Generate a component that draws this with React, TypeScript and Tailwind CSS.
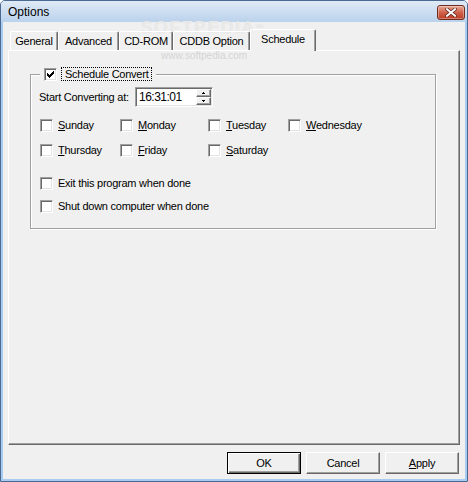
import React from "react";

function CheckBox({ checked = false }: { checked?: boolean }) {
  return (
    <span className="relative box-border block h-[13px] w-[13px] shrink-0 border border-b-white border-l-[#a0a0a0] border-r-white border-t-[#a0a0a0] bg-white shadow-[inset_1px_1px_0_#696969,inset_-1px_-1px_0_#e3e3e3]">
      {checked && (
        <svg className="absolute left-[2px] top-[2px]" width="7" height="7" viewBox="0 0 7 7" shapeRendering="crispEdges">
          <rect x="0" y="2" width="1" height="3" fill="#000" />
          <rect x="1" y="3" width="1" height="3" fill="#000" />
          <rect x="2" y="4" width="1" height="3" fill="#000" />
          <rect x="3" y="3" width="1" height="3" fill="#000" />
          <rect x="4" y="2" width="1" height="3" fill="#000" />
          <rect x="5" y="1" width="1" height="3" fill="#000" />
          <rect x="6" y="0" width="1" height="3" fill="#000" />
        </svg>
      )}
    </span>
  );
}

function Day({ width, children }: { width: string; children: React.ReactNode }) {
  return (
    <div className={"flex items-center " + width}>
      <CheckBox />
      <span className="ml-[5px] leading-[13px]">{children}</span>
    </div>
  );
}

function SpinBtn({ up }: { up: boolean }) {
  return (
    <div className="box-border flex h-[8px] w-[15px] items-center justify-center border border-b-[#696969] border-l-white border-r-[#696969] border-t-white bg-[#f0f0f0] shadow-[inset_-1px_-1px_0_#a0a0a0]">
      <svg width="3" height="2" viewBox="0 0 3 2" shapeRendering="crispEdges">
        {up ? (
          <>
            <rect x="1" y="0" width="1" height="1" fill="#000" />
            <rect x="0" y="1" width="3" height="1" fill="#000" />
          </>
        ) : (
          <>
            <rect x="0" y="0" width="3" height="1" fill="#000" />
            <rect x="1" y="1" width="1" height="1" fill="#000" />
          </>
        )}
      </svg>
    </div>
  );
}

function Btn({ children, isDefault = false }: { children: React.ReactNode; isDefault?: boolean }) {
  return isDefault ? (
    <div className="box-border flex h-[22px] w-[74px] items-center justify-center border border-black bg-[#f0f0f0] shadow-[inset_1px_1px_0_#fff,inset_-1px_-1px_0_#696969,inset_-2px_-2px_0_#a0a0a0]">
      {children}
    </div>
  ) : (
    <div className="box-border flex h-[22px] w-[74px] items-center justify-center border border-b-[#696969] border-l-white border-r-[#696969] border-t-white bg-[#f0f0f0] shadow-[inset_-1px_-1px_0_#a0a0a0]">
      {children}
    </div>
  );
}

export default function App() {
  return (
    <div className="relative box-border flex h-[482px] w-[468px] flex-col overflow-hidden rounded-t-[5px] border border-[#4a6a91] bg-[#a9cbef] font-['Liberation_Sans',Arial,sans-serif] text-[11px] tracking-[-0.25px] text-black">
      {/* title bar */}
      <div className="flex h-[21px] shrink-0 items-center bg-gradient-to-b from-[#e0eaf6] to-[#bad2ec] pl-[7px] pr-[2px]">
        <span className="text-[12px] tracking-normal text-black">Options</span>
        <div className="ml-auto mt-[1px] flex h-[15px] w-[28px] items-center justify-center rounded-[3px] border border-[#6e2b20] bg-gradient-to-b from-[#e8a897] via-[#d0614a] to-[#bd3b22] shadow-[inset_0_0_0_1px_rgba(255,255,255,0.35)]">
          <svg width="12" height="9" viewBox="0 0 12 9">
            <path d="M2 1.2 L10 7.8 M10 1.2 L2 7.8" stroke="#5a2418" strokeWidth="3.4" strokeLinecap="square" />
            <path d="M2 1.2 L10 7.8 M10 1.2 L2 7.8" stroke="#ffffff" strokeWidth="2" strokeLinecap="square" />
          </svg>
        </div>
      </div>

      {/* body */}
      <div className="mx-[2px] mb-[2px] flex flex-1 flex-col bg-[#f0f0f0] px-[5px] pt-[7px]">
        {/* tabs */}
        <div className="relative z-10 -mb-px flex h-[22px] items-end pl-[2px]">
          <div className="mb-px box-border flex h-[19px] w-[48px] items-center justify-center rounded-t-[2px] border-l border-r border-t border-l-white border-r-[#696969] border-t-white leading-[13px] shadow-[inset_-1px_0_0_#a0a0a0]">
            General
          </div>
          <div className="mb-px box-border flex h-[19px] w-[61px] items-center justify-center rounded-t-[2px] border-l border-r border-t border-l-white border-r-[#696969] border-t-white leading-[13px] shadow-[inset_-1px_0_0_#a0a0a0]">
            Advanced
          </div>
          <div className="mb-px box-border flex h-[19px] w-[54px] items-center justify-center rounded-t-[2px] border-l border-r border-t border-l-white border-r-[#696969] border-t-white leading-[13px] shadow-[inset_-1px_0_0_#a0a0a0]">
            CD-ROM
          </div>
          <div className="mb-px box-border flex h-[19px] w-[77px] items-center justify-center rounded-t-[2px] border-l border-r border-t border-l-white border-r-[#696969] border-t-white leading-[13px] shadow-[inset_-1px_0_0_#a0a0a0]">
            CDDB Option
          </div>
          <div className="box-border flex h-[22px] w-[66px] items-center justify-center rounded-t-[2px] border-l border-r border-t border-l-white border-r-[#696969] border-t-white bg-[#f0f0f0] pb-[3px] leading-[13px] shadow-[inset_-1px_0_0_#a0a0a0]">
            Schedule
          </div>
        </div>

        {/* panel */}
        <div className="box-border h-[395px] border border-b-[#696969] border-l-white border-r-[#696969] border-t-white shadow-[inset_-1px_-1px_0_#a0a0a0]">
          <div className="relative ml-[21px] mt-[23px] box-border h-[155px] w-[406px] border border-[#a0a0a0] pl-[8px] pt-[12px] shadow-[inset_1px_1px_0_#fff,1px_1px_0_#fff]">
            {/* legend */}
            <div className="absolute left-[9px] top-[-8px] flex h-[14px] items-center gap-[4px] bg-[#f0f0f0] px-[4px]">
              <CheckBox checked />
              <span className="box-border border border-dotted border-black px-[3px] leading-[12px]">Schedule Convert</span>
            </div>

            <div className="flex h-[20px] items-center">
              <span className="w-[96px]">Start Converting at:</span>
              <div className="box-border flex h-[20px] w-[78px] items-center border border-b-white border-l-[#a0a0a0] border-r-white border-t-[#a0a0a0] bg-white pl-[3px] pr-[1px] shadow-[inset_1px_1px_0_#696969,inset_-1px_-1px_0_#e3e3e3]">
                <span className="text-[12px] tracking-[-0.5px]">16:31:01</span>
                <div className="ml-auto flex flex-col">
                  <SpinBtn up />
                  <SpinBtn up={false} />
                </div>
              </div>
            </div>

            <div className="ml-px mt-[12px] flex h-[13px] items-center">
              <Day width="w-[80px]"><u>S</u>unday</Day>
              <Day width="w-[88px]"><u>M</u>onday</Day>
              <Day width="w-[80px]"><u>T</u>uesday</Day>
              <Day width="w-[90px]"><u>W</u>ednesday</Day>
            </div>
            <div className="ml-px mt-[12px] flex h-[13px] items-center">
              <Day width="w-[80px]"><u>T</u>hursday</Day>
              <Day width="w-[88px]"><u>F</u>riday</Day>
              <Day width="w-[80px]"><u>S</u>aturday</Day>
            </div>
            <div className="ml-px mt-[20px] flex h-[13px] items-center">
              <Day width="w-[200px]">Exit this program when done</Day>
            </div>
            <div className="ml-px mt-[10px] flex h-[13px] items-center">
              <Day width="w-[200px]">Shut down computer when done</Day>
            </div>
          </div>
        </div>

        {/* buttons */}
        <div className="mt-[7px] flex justify-end gap-[5px] pr-px">
          <Btn isDefault>OK</Btn>
          <Btn>Cancel</Btn>
          <Btn>
            <span><u>A</u>pply</span>
          </Btn>
        </div>
      </div>

      {/* watermark */}
      <div className="pointer-events-none absolute left-[140px] top-[22px] text-[17px] leading-[9px] tracking-[2px] text-white/60 [text-shadow:0_0_1px_#c8c8c8]">
        SOFTPEDIA<span className="align-top text-[8px]">™</span>
      </div>
      <div className="pointer-events-none absolute left-[160px] top-[50px] text-[10px] leading-[10px] tracking-[0px] text-[#d4d4d4]">
        www.softpedia.com
      </div>
    </div>
  );
}
